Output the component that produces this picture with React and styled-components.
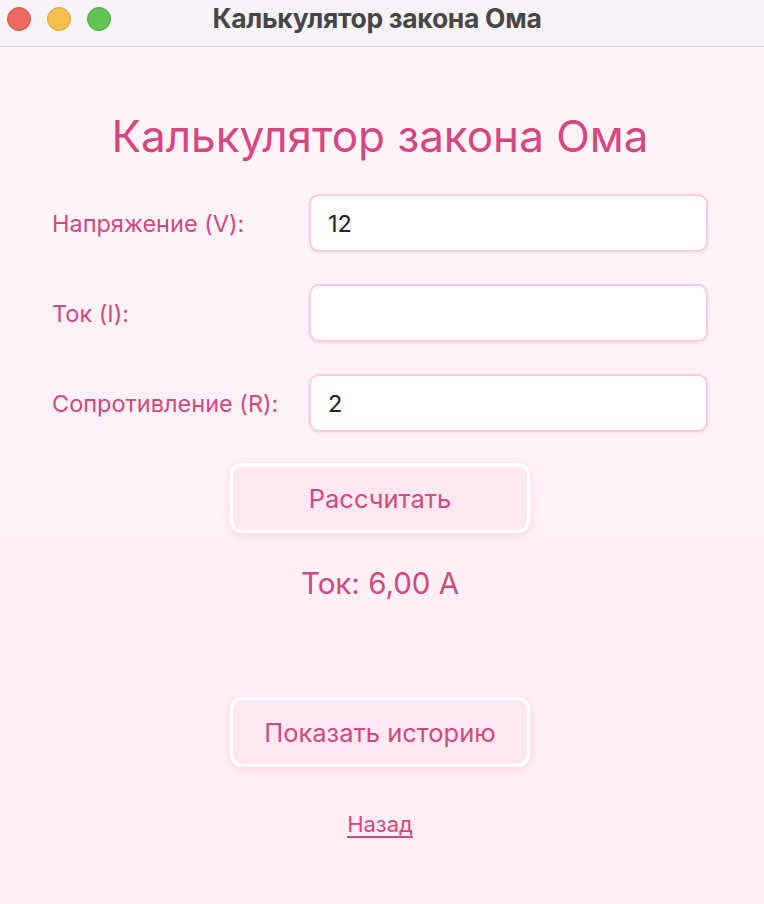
import React, { useState } from 'react'
import styled, { createGlobalStyle } from 'styled-components'

const PINK = '#d6477f'

const GlobalStyle = createGlobalStyle`
    html, body {
        margin: 0;
        padding: 0;
        background: #fff3f7;
    }
    * {
        box-sizing: border-box;
    }
`

const fields = [
    { label: 'Напряжение (V):', value: '12' },
    { label: 'Ток (I):', value: '' },
    { label: 'Сопротивление (R):', value: '2' },
]

const App = () => {
    const [values, setValues] = useState(fields.map((f) => f.value))

    const update = (i, v) => {
        setValues((prev) => prev.map((old, j) => (j === i ? v : old)))
    }

    return (
        <Window>
            <GlobalStyle />
            <TitleBar>
                <Lights>
                    <Light color="#ee6a5e" edge="#d35349" />
                    <Light color="#f6be4f" edge="#d9a13a" />
                    <Light color="#61c454" edge="#4ea73f" />
                </Lights>
                <WindowTitle>Калькулятор закона Ома</WindowTitle>
            </TitleBar>
            <Content>
                <Heading>Калькулятор закона Ома</Heading>
                <Form>
                    {fields.map((f, i) => (
                        <Row key={f.label}>
                            <Label>{f.label}</Label>
                            <Input
                                value={values[i]}
                                onChange={(e) => update(i, e.target.value)}
                            />
                        </Row>
                    ))}
                </Form>
                <Button>Рассчитать</Button>
                <Result>Ток: 6,00 А</Result>
                <Button spaced>Показать историю</Button>
                <BackLink href="#">Назад</BackLink>
            </Content>
        </Window>
    )
}

export default App

const Window = styled.div`
    width: 764px;
    height: 904px;
    display: flex;
    flex-direction: column;
    font-family: Inter, "Noto Sans", sans-serif;
    overflow: hidden;
`
const TitleBar = styled.div`
    height: 47px;
    flex-shrink: 0;
    display: flex;
    align-items: center;
    justify-content: center;
    position: relative;
    background: #f7f4f8;
    border-bottom: 1px solid #dcd7dc;
`
const Lights = styled.div`
    position: absolute;
    left: 7px;
    top: 7px;
    display: flex;
    gap: 16px;
`
const Light = styled.span`
    width: 24px;
    height: 24px;
    border-radius: 50%;
    background: ${(p) => p.color};
    border: 1px solid ${(p) => p.edge};
`
const WindowTitle = styled.div`
    font-size: 26.5px;
    font-weight: 700;
    letter-spacing: -0.3px;
    color: #484548;
    margin-top: -10px;
    margin-left: -10px;
`
const Content = styled.div`
    flex: 1;
    display: flex;
    flex-direction: column;
    align-items: center;
    padding: 61px 56px 0 52px;
    background: linear-gradient(180deg, #fff5f8 0%, #ffeef4 100%);
`
const Heading = styled.h1`
    margin: 0;
    font-size: 44px;
    font-weight: 400;
    color: ${PINK};
    line-height: 56px;
`
const Form = styled.div`
    width: 100%;
    margin-top: 30px;
    display: flex;
    flex-direction: column;
    gap: 32px;
`
const Row = styled.div`
    display: flex;
    align-items: center;
`
const Label = styled.label`
    width: 257px;
    flex-shrink: 0;
    font-size: 23.5px;
    color: ${PINK};
`
const Input = styled.input`
    flex: 1;
    min-width: 0;
    height: 58px;
    padding: 0 17px;
    border: 2px solid #ffcade;
    border-radius: 10px;
    background: #fff;
    font-family: Inter, "Noto Sans", sans-serif;
    font-size: 23.5px;
    color: #222;
    outline: none;
    box-shadow: 0 1px 3px rgba(230, 150, 180, 0.25);
`
const Button = styled.button`
    width: 300px;
    height: 70px;
    margin-top: ${(p) => (p.spaced ? '96px' : '31px')};
    border: 3px solid #fff;
    border-radius: 12px;
    background: #ffe8f0;
    color: ${PINK};
    font-family: Inter, "Noto Sans", sans-serif;
    font-size: 25.5px;
    box-shadow: 0 3px 8px rgba(220, 150, 175, 0.3);
    cursor: pointer;
`
const Result = styled.div`
    margin-top: 32px;
    font-size: 29.5px;
    color: ${PINK};
    line-height: 36px;
`
const BackLink = styled.a`
    margin-top: 44px;
    font-size: 22px;
    color: ${PINK};
    text-decoration: underline;
    text-underline-offset: 4px;
`
